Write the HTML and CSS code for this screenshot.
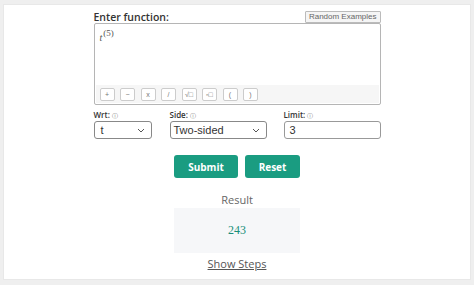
FILE: index.html
```html
<!DOCTYPE html>
<html>
<head>
<meta charset="utf-8">
<link rel="stylesheet" href="styles.css">
</head>
<body>
<div class="card">
  <div class="calc">
    <div class="head-row">
      <span class="label-main">Enter function:</span>
      <button class="random">Random Examples</button>
    </div>
    <div class="editor">
      <div class="math"><span class="var">t</span><sup class="sup">(5)</sup></div>
      <div class="toolbar">
        <span class="tb">+</span>
        <span class="tb">−</span>
        <span class="tb">x</span>
        <span class="tb">/</span>
        <span class="tb">√□</span>
        <span class="tb"><sup class="tiny">n</sup>□</span>
        <span class="tb">(</span>
        <span class="tb">)</span>
      </div>
    </div>
    <div class="fields">
      <div class="field f-wrt">
        <span class="flabel">Wrt: <span class="info">ⓘ</span></span>
        <div class="select"><span>t</span><svg width="8" height="5" viewBox="0 0 8 5"><path d="M1 1l3 3 3-3" fill="none" stroke="#555" stroke-width="1"/></svg></div>
      </div>
      <div class="field f-side">
        <span class="flabel">Side: <span class="info">ⓘ</span></span>
        <div class="select"><span>Two-sided</span><svg width="8" height="5" viewBox="0 0 8 5"><path d="M1 1l3 3 3-3" fill="none" stroke="#555" stroke-width="1"/></svg></div>
      </div>
      <div class="field f-limit">
        <span class="flabel">Limit: <span class="info">ⓘ</span></span>
        <div class="input">3</div>
      </div>
    </div>
    <div class="actions">
      <button class="btn">Submit</button>
      <button class="btn">Reset</button>
    </div>
    <div class="result-title">Result</div>
    <div class="result-box">243</div>
    <div class="steps">Show Steps</div>
  </div>
</div>
</body>
</html>
```
FILE: styles.css
```css
html, body { margin: 0; padding: 0; }
body {
  background: #efefef;
  width: 474px;
  height: 285px;
  font-family: "Open Sans", "Liberation Sans", sans-serif;
  color: #333;
  overflow: hidden;
}
.card {
  background: #fff;
  margin: 4px 3px 0 3px;
  height: 276px;
  border: 1px solid #e8e8e8;
  box-sizing: border-box;
  display: flex;
  justify-content: center;
}
.calc {
  width: 287px;
  display: flex;
  flex-direction: column;
}
.head-row {
  display: flex;
  justify-content: space-between;
  align-items: flex-end;
  margin-top: 5px;
  height: 13px;
}
.label-main {
  font-size: 10.5px;
  font-weight: 600;
  color: #333;
  line-height: 12px;
}
.random {
  font-family: "Liberation Sans", Arial, sans-serif;
  font-size: 8px;
  color: #666;
  background: #f5f5f5;
  border: 1px solid #bbb;
  border-radius: 1px;
  padding: 0 3px;
  height: 12px;
  line-height: 10px;
}
.editor {
  border: 1px solid #b5b5b5;
  border-radius: 2px;
  height: 82px;
  box-sizing: border-box;
  display: flex;
  flex-direction: column;
  justify-content: space-between;
}
.math {
  font-family: "Liberation Serif", serif;
  padding: 3px 0 0 5px;
  color: #555;
  font-size: 10px;
  line-height: 12px;
}
.var { font-style: italic; font-size: 10px; position: relative; top: 5px; }
.sup { font-size: 9px; vertical-align: 0; margin-left: 1px; }
.toolbar {
  background: #f6f6f6;
  height: 18px;
  margin: 0 1px 1px 1px;
  display: flex;
  align-items: center;
  gap: 5.5px;
  padding-left: 4px;
}
.tb {
  width: 15px;
  height: 13px;
  box-sizing: border-box;
  border: 1px solid #ccc;
  border-radius: 2px;
  background: #fff;
  font-size: 7px;
  color: #777;
  display: flex;
  align-items: center;
  justify-content: center;
  font-family: "Liberation Sans", sans-serif;
}
.tiny { font-size: 4px; vertical-align: 3px; }
.fields {
  display: flex;
  margin-top: 5px;
}
.field { display: flex; flex-direction: column; }
.f-wrt { width: 58px; margin-right: 18px; }
.f-side { width: 97px; margin-right: 17px; }
.f-limit { width: 97px; }
.flabel {
  font-size: 8px;
  font-weight: 600;
  color: #333;
  line-height: 10px;
}
.info { font-size: 6px; font-weight: 400; color: #777; }
.select, .input {
  height: 18px;
  box-sizing: border-box;
  border: 1px solid #888;
  border-radius: 3px;
  display: flex;
  align-items: center;
  justify-content: space-between;
  padding: 0 6px 0 6px;
  font-family: "Liberation Sans", Arial, sans-serif;
  font-size: 11px;
  color: #333;
}
.f-side .select { padding-left: 3px; }
.input { justify-content: flex-start; padding-left: 5px; border-color: #999; }
.actions {
  display: flex;
  justify-content: center;
  gap: 7px;
  margin-top: 16px;
}
.btn {
  background: #1a9c81;
  color: #fff;
  border: none;
  border-radius: 3px;
  font-family: "Open Sans", sans-serif;
  font-weight: 700;
  font-size: 10px;
  height: 23px;
  padding: 0 10px;
}
.btn:first-child { width: 64px; }
.btn:last-child { width: 55px; }
.result-title {
  text-align: center;
  margin-top: 15px;
  font-size: 11px;
  color: #666;
  line-height: 14px;
}
.result-box {
  align-self: center;
  width: 126px;
  height: 45px;
  background: #f6f7f9;
  display: flex;
  align-items: center;
  justify-content: center;
  font-family: "Liberation Serif", serif;
  font-size: 12px;
  color: #1a8f7a;
  margin-top: 1px;
}
.steps {
  text-align: center;
  font-size: 11px;
  color: #555;
  text-decoration: underline;
  margin-top: 4px;
  line-height: 14px;
}
```
